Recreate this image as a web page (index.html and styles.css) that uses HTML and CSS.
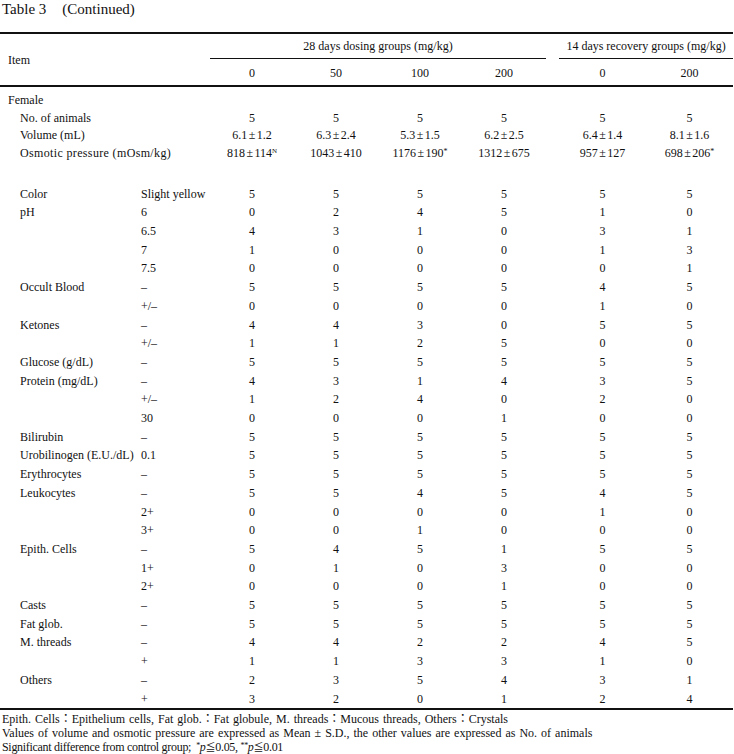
FILE: index.html
```html
<!DOCTYPE html>
<html lang="en">
<head>
<meta charset="utf-8">
<title>Table 3 (Continued)</title>
<link rel="stylesheet" href="styles.css">
</head>
<body>
<div class="page">
  <p class="title">Table 3<span class="gap"></span>(Continued)</p>
  <table class="data">
    <colgroup>
      <col class="c-item"><col class="c-sub">
      <col class="c-num"><col class="c-num"><col class="c-num"><col class="c-num">
      <col class="c-gap">
      <col class="c-rec"><col class="c-rec">
    </colgroup>
    <thead>
      <tr class="h1">
        <th class="item-h" colspan="2" rowspan="2">Item</th>
        <th class="grp" colspan="4">28 days dosing groups (mg/kg)</th>
        <th class="gapcell"></th>
        <th class="grp" colspan="2">14 days recovery groups (mg/kg)</th>
      </tr>
      <tr class="h2">
        <th>0</th><th>50</th><th>100</th><th>200</th>
        <th></th>
        <th>0</th><th>200</th>
      </tr>
    </thead>
    <tbody class="top">
      <tr class="first"><td class="lbl0" colspan="2">Female</td><td></td><td></td><td></td><td></td><td></td><td></td><td></td></tr>
      <tr><td class="lbl" colspan="2">No. of animals</td><td>5</td><td>5</td><td>5</td><td>5</td><td></td><td>5</td><td>5</td></tr>
      <tr><td class="lbl" colspan="2">Volume (mL)</td><td>6.1<span class="pm">±</span>1.2</td><td>6.3<span class="pm">±</span>2.4</td><td>5.3<span class="pm">±</span>1.5</td><td>6.2<span class="pm">±</span>2.5</td><td></td><td>6.4<span class="pm">±</span>1.4</td><td>8.1<span class="pm">±</span>1.6</td></tr>
      <tr><td class="lbl wide" colspan="2">Osmotic pressure (mOsm/kg)</td><td>818<span class="pm">±</span>114<sup class="sn">N</sup></td><td>1043<span class="pm">±</span>410</td><td>1176<span class="pm">±</span>190<sup class="st">*</sup></td><td>1312<span class="pm">±</span>675</td><td></td><td>957<span class="pm">±</span>127</td><td>698<span class="pm">±</span>206<sup class="st">*</sup></td></tr>
    </tbody>
    <tbody class="main">
      <tr class="spacer"><td colspan="9"></td></tr>
      <tr><td class="lbl">Color</td><td class="sub">Slight yellow</td><td>5</td><td>5</td><td>5</td><td>5</td><td></td><td>5</td><td>5</td></tr>
      <tr><td class="lbl">pH</td><td class="sub">6</td><td>0</td><td>2</td><td>4</td><td>5</td><td></td><td>1</td><td>0</td></tr>
      <tr><td class="lbl"></td><td class="sub">6.5</td><td>4</td><td>3</td><td>1</td><td>0</td><td></td><td>3</td><td>1</td></tr>
      <tr><td class="lbl"></td><td class="sub">7</td><td>1</td><td>0</td><td>0</td><td>0</td><td></td><td>1</td><td>3</td></tr>
      <tr><td class="lbl"></td><td class="sub">7.5</td><td>0</td><td>0</td><td>0</td><td>0</td><td></td><td>0</td><td>1</td></tr>
      <tr><td class="lbl">Occult Blood</td><td class="sub">–</td><td>5</td><td>5</td><td>5</td><td>5</td><td></td><td>4</td><td>5</td></tr>
      <tr><td class="lbl"></td><td class="sub">+/–</td><td>0</td><td>0</td><td>0</td><td>0</td><td></td><td>1</td><td>0</td></tr>
      <tr><td class="lbl">Ketones</td><td class="sub">–</td><td>4</td><td>4</td><td>3</td><td>0</td><td></td><td>5</td><td>5</td></tr>
      <tr><td class="lbl"></td><td class="sub">+/–</td><td>1</td><td>1</td><td>2</td><td>5</td><td></td><td>0</td><td>0</td></tr>
      <tr><td class="lbl">Glucose (g/dL)</td><td class="sub">–</td><td>5</td><td>5</td><td>5</td><td>5</td><td></td><td>5</td><td>5</td></tr>
      <tr><td class="lbl">Protein (mg/dL)</td><td class="sub">–</td><td>4</td><td>3</td><td>1</td><td>4</td><td></td><td>3</td><td>5</td></tr>
      <tr><td class="lbl"></td><td class="sub">+/–</td><td>1</td><td>2</td><td>4</td><td>0</td><td></td><td>2</td><td>0</td></tr>
      <tr><td class="lbl"></td><td class="sub">30</td><td>0</td><td>0</td><td>0</td><td>1</td><td></td><td>0</td><td>0</td></tr>
      <tr><td class="lbl">Bilirubin</td><td class="sub">–</td><td>5</td><td>5</td><td>5</td><td>5</td><td></td><td>5</td><td>5</td></tr>
      <tr><td class="lbl">Urobilinogen (E.U./dL)</td><td class="sub">0.1</td><td>5</td><td>5</td><td>5</td><td>5</td><td></td><td>5</td><td>5</td></tr>
      <tr><td class="lbl">Erythrocytes</td><td class="sub">–</td><td>5</td><td>5</td><td>5</td><td>5</td><td></td><td>5</td><td>5</td></tr>
      <tr><td class="lbl">Leukocytes</td><td class="sub">–</td><td>5</td><td>5</td><td>4</td><td>5</td><td></td><td>4</td><td>5</td></tr>
      <tr><td class="lbl"></td><td class="sub">2+</td><td>0</td><td>0</td><td>0</td><td>0</td><td></td><td>1</td><td>0</td></tr>
      <tr><td class="lbl"></td><td class="sub">3+</td><td>0</td><td>0</td><td>1</td><td>0</td><td></td><td>0</td><td>0</td></tr>
      <tr><td class="lbl">Epith. Cells</td><td class="sub">–</td><td>5</td><td>4</td><td>5</td><td>1</td><td></td><td>5</td><td>5</td></tr>
      <tr><td class="lbl"></td><td class="sub">1+</td><td>0</td><td>1</td><td>0</td><td>3</td><td></td><td>0</td><td>0</td></tr>
      <tr><td class="lbl"></td><td class="sub">2+</td><td>0</td><td>0</td><td>0</td><td>1</td><td></td><td>0</td><td>0</td></tr>
      <tr><td class="lbl">Casts</td><td class="sub">–</td><td>5</td><td>5</td><td>5</td><td>5</td><td></td><td>5</td><td>5</td></tr>
      <tr><td class="lbl">Fat glob.</td><td class="sub">–</td><td>5</td><td>5</td><td>5</td><td>5</td><td></td><td>5</td><td>5</td></tr>
      <tr><td class="lbl">M. threads</td><td class="sub">–</td><td>4</td><td>4</td><td>2</td><td>2</td><td></td><td>4</td><td>5</td></tr>
      <tr><td class="lbl"></td><td class="sub">+</td><td>1</td><td>1</td><td>3</td><td>3</td><td></td><td>1</td><td>0</td></tr>
      <tr><td class="lbl">Others</td><td class="sub">–</td><td>2</td><td>3</td><td>5</td><td>4</td><td></td><td>3</td><td>1</td></tr>
      <tr class="last"><td class="lbl"></td><td class="sub">+</td><td>3</td><td>2</td><td>0</td><td>1</td><td></td><td>2</td><td>4</td></tr>
    </tbody>
  </table>
  <div class="notes">
    <p>Epith. Cells<span class="fw">：</span>Epithelium cells, Fat glob.<span class="fw">：</span>Fat globule, M. threads<span class="fw">：</span>Mucous threads, Others<span class="fw">：</span>Crystals</p>
    <p>Values of volume and osmotic pressure are expressed as Mean ± S.D., the other values are expressed as No. of animals</p>
    <p class="sig">Significant difference from control group<span class="semi">;</span><sup class="st">*</sup><i>p</i><span class="le">≦</span>0.05, <sup class="st">**</sup><i>p</i><span class="le">≦</span>0.01</p>
  </div>
</div>
</body>
</html>
```

FILE: styles.css
```css
html, body {
  margin: 0;
  padding: 0;
  background: #fff;
}

body {
  font-family: "Liberation Serif", "DejaVu Serif", "Noto Sans CJK JP", serif;
  font-size: 12px;
  color: #111;
}

.page {
  width: 734px;
}

.title {
  margin: 0;
  padding-left: 2px;
  height: 32px;
  line-height: 18px;
  font-size: 15px;
}

.title .gap {
  display: inline-block;
  width: 16px;
}

.data {
  width: 732px;
  border-collapse: collapse;
  table-layout: fixed;
  border-top: 2px solid #111;
  border-bottom: 2px solid #111;
}

.c-item { width: 140px; }
.c-sub { width: 70px; }
.c-num { width: 84px; }
.c-gap { width: 13px; }
.c-rec { width: 87px; }

.data th,
.data td {
  padding: 0;
  font-weight: normal;
  text-align: center;
  white-space: nowrap;
}

.h1 th {
  height: 24px;
  line-height: 24px;
  vertical-align: middle;
}

.h1 th.grp {
  border-bottom: 1px solid #111;
}

.h1 th.item-h {
  text-align: left;
  padding-left: 8px;
  padding-top: 0;
}

.h2 th {
  height: 24px;
  line-height: 24px;
  padding-top: 2px;
}

thead {
  border-bottom: 2px solid #111;
}

.top td {
  height: 17.5px;
  line-height: 17.5px;
}

.top tr.first td {
  padding-top: 5px;
}

.main td {
  height: 18.7px;
  line-height: 18.7px;
}

.main tr.spacer td {
  height: 22.6px;
  line-height: 0;
}

.data td.lbl0 {
  text-align: left;
  padding-left: 8px;
}

.data td.lbl {
  text-align: left;
  padding-left: 20px;
}

.data td.wide {
  letter-spacing: 0.35px;
}

.data td.sub {
  text-align: left;
  padding-left: 1px;
}

.pm {
  margin: 0 1.5px;
}

sup.sn {
  font-size: 7px;
  vertical-align: 4px;
  line-height: 0;
}

sup.st {
  font-size: 8px;
  vertical-align: 3px;
  line-height: 0;
}

.notes {
  padding: 1px 0 0 2px;
}

.notes p {
  margin: 0;
  line-height: 14px;
  font-size: 12px;
  word-spacing: 1px;
}

.notes .fw {
  font-family: "Noto Sans CJK JP", sans-serif;
}

.notes .sig {
  word-spacing: 0;
  letter-spacing: -0.3px;
}

.notes .semi {
  margin-right: 5px;
}

.notes .le {
  font-size: 10px;
}
```
